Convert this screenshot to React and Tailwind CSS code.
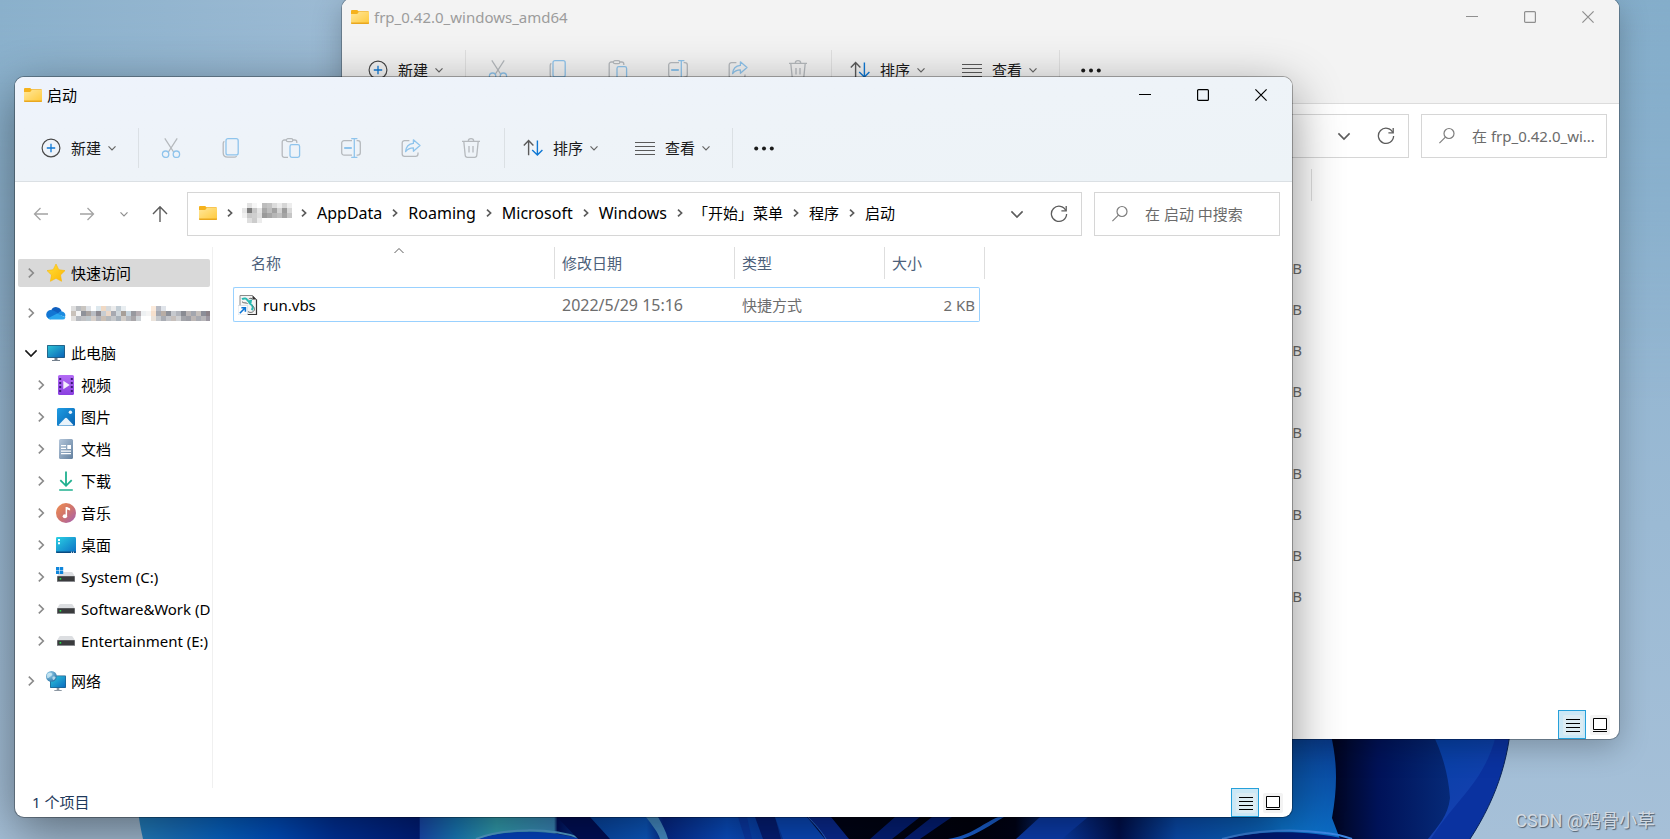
import React from "react";

/* ---------- small line icons ---------- */

function ChevronDown({ className = "", size = 10, stroke = 1.2 }) {
  return (
    <svg className={className} width={size} height={size} viewBox="0 0 10 10" fill="none" stroke="currentColor" strokeWidth={stroke} aria-hidden="true">
      <path d="M1.5 3.4 5 6.9l3.5-3.5" />
    </svg>
  );
}

function ChevronRight({ className = "", size = 16, stroke = 1.6 }) {
  return (
    <svg className={className} width={size} height={size} viewBox="0 0 16 16" fill="none" stroke="currentColor" strokeWidth={stroke} aria-hidden="true">
      <path d="M5.8 3.6 10.3 8l-4.5 4.4" />
    </svg>
  );
}

function CrumbChevron() {
  return (
    <svg className="shrink-0 text-[#5c5c5c]" width="26" height="16" viewBox="0 0 26 16" fill="none" stroke="currentColor" strokeWidth="1.7" aria-hidden="true">
      <path d="M11 4.6 14.6 8 11 11.4" />
    </svg>
  );
}

function FolderIcon() {
  return (
    <svg className="shrink-0" width="18" height="14" viewBox="0 0 18 14" aria-hidden="true">
      <defs>
        <linearGradient id="folderFace" x1="0" y1="0" x2="1" y2="1">
          <stop offset="0" stopColor="#ffe79a" />
          <stop offset="1" stopColor="#ffc93a" />
        </linearGradient>
      </defs>
      <path d="M0 1a1 1 0 0 1 1-1h5.2l1.3 1.2H17a1 1 0 0 1 1 1V12H0z" fill="#f5b21c" />
      <path d="M0 4h6.2l1.6-2H18v11a1 1 0 0 1-1 1H1a1 1 0 0 1-1-1z" fill="url(#folderFace)" />
      <path d="M0 12.6V13a1 1 0 0 0 1 1h16a1 1 0 0 0 1-1v-.4z" fill="#e9a71f" />
    </svg>
  );
}

function PlusCircle() {
  return (
    <svg width="20" height="20" viewBox="0 0 20 20" fill="none" aria-hidden="true">
      <circle cx="10" cy="10" r="8.9" stroke="#4a4a4a" strokeWidth="1.2" />
      <path d="M10 5.8v8.4M5.8 10h8.4" stroke="#0f78d4" strokeWidth="1.3" />
    </svg>
  );
}

const GREY = "#b5b9bd";
const BLUE = "#8fc4ec";

function CutIcon() {
  return (
    <svg width="20" height="20" viewBox="0 0 20 20" fill="none" strokeWidth="1.3" aria-hidden="true">
      <path d="M3.8.4 12.6 14M16.2.4 7.4 14" stroke={GREY} />
      <circle cx="4.6" cy="16.2" r="3.2" stroke={BLUE} />
      <circle cx="15.4" cy="16.2" r="3.2" stroke={BLUE} />
    </svg>
  );
}

function CopyIcon() {
  return (
    <svg width="20" height="20" viewBox="0 0 20 20" fill="none" strokeWidth="1.3" aria-hidden="true">
      <path d="M3.4 3.4C2.6 3.8 2.2 4.5 2.2 5.6v9.2c0 2.6 1.8 4.4 4.4 4.4h6.6c1.2 0 1.9-.4 2.4-1.2" stroke={GREY} />
      <rect x="5" y=".7" width="12.2" height="16.2" rx="2" stroke={BLUE} />
    </svg>
  );
}

function PasteIcon() {
  return (
    <svg width="20" height="20" viewBox="0 0 20 20" fill="none" strokeWidth="1.3" aria-hidden="true">
      <path d="M7 19.3H3.2a2 2 0 0 1-2-2V4a2 2 0 0 1 2-2h2.2M11.6 2h2.2a2 2 0 0 1 2 2v1" stroke={GREY} />
      <rect x="5.4" y=".7" width="6.4" height="3" rx="1.5" stroke={GREY} />
      <rect x="9" y="6.6" width="9.6" height="12.7" rx="1.8" stroke={BLUE} />
    </svg>
  );
}

function RenameIcon() {
  return (
    <svg width="20" height="20" viewBox="0 0 20 20" fill="none" strokeWidth="1.3" aria-hidden="true">
      <path d="M11 2.7H3.1A2.4 2.4 0 0 0 .7 5.1v9.6a2.4 2.4 0 0 0 2.4 2.4H11M15.6 2.7h1.3a2.4 2.4 0 0 1 2.4 2.4v9.6a2.4 2.4 0 0 1-2.4 2.4h-1.3" stroke={GREY} />
      <path d="M13.3.7v18.6M10.2.7h6.2M10.2 19.3h6.2" stroke={BLUE} />
      <path d="M3.2 10h7.6" stroke={BLUE} strokeWidth="2" />
    </svg>
  );
}

function ShareIcon() {
  return (
    <svg width="20" height="20" viewBox="0 0 20 20" fill="none" strokeWidth="1.3" strokeLinejoin="round" aria-hidden="true">
      <path d="M8.4 2.6H3.6a2.4 2.4 0 0 0-2.4 2.4v11a2.4 2.4 0 0 0 2.4 2.4h11a2.4 2.4 0 0 0 2.4-2.4v-1.6" stroke={GREY} />
      <path d="M12.4 1.8 19 7.5l-6.6 5.7V9.8c-3.6 0-6 1.2-7.8 3.8.4-4.6 3-7.7 7.8-8.2z" stroke={BLUE} />
    </svg>
  );
}

function TrashIcon() {
  return (
    <svg width="20" height="20" viewBox="0 0 20 20" fill="none" stroke={GREY} strokeWidth="1.3" aria-hidden="true">
      <path d="M1 3.3h18M7.3 3.1a2.7 2.4 0 0 1 5.4 0M2.8 3.5l1.4 13.8a2.2 2.2 0 0 0 2.2 2h7.2a2.2 2.2 0 0 0 2.2-2l1.4-13.8M8 8v6.4M12 8v6.4" />
    </svg>
  );
}

function SortIcon() {
  return (
    <svg width="20" height="20" viewBox="0 0 20 20" fill="none" strokeWidth="1.4" aria-hidden="true">
      <path d="M5.6 17.2V2.8M.8 7.6l4.8-5 4.8 5" stroke="#5a5a5a" />
      <path d="M14.4 2.4v14.6M9.2 12l5.2 5 5-5" stroke="#0f78d4" />
    </svg>
  );
}

function ViewIcon() {
  return (
    <svg width="20" height="20" viewBox="0 0 20 20" fill="none" stroke="#5a5a5a" strokeWidth="1.2" aria-hidden="true">
      <path d="M0 4.5h20M0 8.5h20M0 12.5h20M0 16.5h20" />
    </svg>
  );
}

function MoreIcon() {
  return (
    <svg width="20" height="20" viewBox="0 0 20 20" fill="#1a1a1a" aria-hidden="true">
      <circle cx="2.2" cy="10.5" r="2" />
      <circle cx="10" cy="10.5" r="2" />
      <circle cx="17.8" cy="10.5" r="2" />
    </svg>
  );
}

/* ---------- navigation pane icons ---------- */

function StarIcon() {
  return (
    <svg width="20" height="20" viewBox="0 0 20 20" aria-hidden="true">
      <defs>
        <linearGradient id="star" x1="0" y1="0" x2="1" y2="1">
          <stop offset="0" stopColor="#ffdf3c" />
          <stop offset="1" stopColor="#fcb500" />
        </linearGradient>
      </defs>
      <path d="m10 1 2.8 5.7 6.2.9-4.5 4.4 1.1 6.3-5.6-3-5.6 3L5.5 12 1 7.6l6.2-.9z" fill="url(#star)" stroke="#fbb800" strokeWidth=".6" strokeLinejoin="round" />
    </svg>
  );
}

function CloudIcon() {
  return (
    <svg width="20" height="20" viewBox="0 0 20 20" aria-hidden="true">
      <path d="M5.2 7.2a5.600 5.600 0 0 1 10.400 1L10 12z" fill="#0f5fbf" />
      <path d="M4.600 16.200A4.600 4.600 0 0 1 5 7c2 0 3 .8 5.500 2.200l5 3z" fill="#1276d3" />
      <path d="M15.600 8.200A4.200 4.200 0 0 1 19 14l-7.500-3c1-1.600 2.300-2.700 4.100-2.800z" fill="#1b8be0" />
      <path d="M2 15.200 11.200 10.400l8.300 4a3.200 3.200 0 0 1-3 2.200H4.600c-1 0-2-.5-2.600-1.400z" fill="#2aa6ee" />
    </svg>
  );
}

function ComputerIcon() {
  return (
    <svg width="20" height="20" viewBox="0 0 20 20" aria-hidden="true">
      <defs>
        <linearGradient id="screen" x1="0" y1="0" x2="1" y2="1">
          <stop offset="0" stopColor="#2cc3d5" />
          <stop offset="1" stopColor="#0a63b8" />
        </linearGradient>
      </defs>
      <rect x="1" y="2" width="18" height="13" rx=".8" fill="#22577c" />
      <rect x="1.8" y="2.8" width="16.4" height="11.4" fill="url(#screen)" />
      <path d="M8.500 15h3v2h-3zM6 17h8v1H6z" fill="#74808c" />
    </svg>
  );
}

function VideoIcon() {
  return (
    <svg width="20" height="20" viewBox="0 0 20 20" aria-hidden="true">
      <defs>
        <linearGradient id="video" x1="0" y1="0" x2="0" y2="1">
          <stop offset="0" stopColor="#b46cf5" />
          <stop offset="1" stopColor="#8a3fe0" />
        </linearGradient>
      </defs>
      <rect x="2" y="0" width="16" height="20" rx="1.5" fill="url(#video)" />
      <path d="M3.200 3h2v2h-2zm0 4h2v2h-2zm0 4h2v2h-2zm0 4h2v2h-2zM14.800 3h2v2h-2zm0 4h2v2h-2zm0 4h2v2h-2zm0 4h2v2h-2z" fill="#3c1a78" />
      <path d="M7.300 5.800v8.400L13.800 10z" fill="#f4eefc" />
    </svg>
  );
}

function PictureIcon() {
  return (
    <svg width="20" height="20" viewBox="0 0 20 20" aria-hidden="true">
      <defs>
        <linearGradient id="picture" x1="0" y1="0" x2="1" y2="1">
          <stop offset="0" stopColor="#1f9de4" />
          <stop offset="1" stopColor="#0762b0" />
        </linearGradient>
      </defs>
      <rect x="1" y="1" width="18" height="18" rx="1.5" fill="url(#picture)" />
      <path d="m2.400 18.200 6.600-7a1.400 1.400 0 0 1 2 0l6.600 7-.6.300H3z" fill="#e8f3fb" />
      <circle cx="14.4" cy="5.2" r="1.7" fill="#e8f3fb" />
    </svg>
  );
}

function DocumentIcon() {
  return (
    <svg width="20" height="20" viewBox="0 0 20 20" aria-hidden="true">
      <defs>
        <linearGradient id="doc" x1="0" y1="0" x2="1" y2="1">
          <stop offset="0" stopColor="#b4c6da" />
          <stop offset="1" stopColor="#62809f" />
        </linearGradient>
      </defs>
      <rect x="3" y="0" width="14" height="20" rx="1.5" fill="url(#doc)" />
      <path d="M5 6h5v1.300H5zm0 2.700h5V10H5zm0 2.700h10v1.300H5zm0 2.600h10v1.200H5zM11.300 6H15v4h-3.700z" fill="#fff" />
    </svg>
  );
}

function DownloadIcon() {
  return (
    <svg width="20" height="20" viewBox="0 0 20 20" fill="none" stroke="#1fb08f" strokeWidth="1.8" aria-hidden="true">
      <path d="M10 .6v14M4.300 9.200l5.700 5.600 5.700-5.600" />
      <path d="M3.200 19h13.600" strokeWidth="1.7" />
    </svg>
  );
}

function MusicIcon() {
  return (
    <svg width="20" height="20" viewBox="0 0 20 20" aria-hidden="true">
      <defs>
        <linearGradient id="music" x1="0" y1="0" x2="1" y2="1">
          <stop offset="0" stopColor="#f08e50" />
          <stop offset=".5" stopColor="#d0746c" />
          <stop offset="1" stopColor="#a35fb5" />
        </linearGradient>
      </defs>
      <circle cx="10" cy="10" r="10" fill="url(#music)" />
      <ellipse cx="8.9" cy="13.2" rx="2.2" ry="2" fill="#fff" />
      <path d="M9.600 4h1.500l3 1.400v2l-3-1v6.800H9.600z" fill="#fff" />
    </svg>
  );
}

function DesktopIcon() {
  return (
    <svg width="20" height="20" viewBox="0 0 20 20" aria-hidden="true">
      <defs>
        <linearGradient id="desk" x1="0" y1="0" x2="1" y2="1">
          <stop offset="0" stopColor="#2bd0e4" />
          <stop offset="1" stopColor="#0b6fc4" />
        </linearGradient>
      </defs>
      <rect x="0" y="2" width="20" height="16" rx="1.2" fill="url(#desk)" />
      <path d="M0 16.600h20v.4a1 1 0 0 1-1 1H1a1 1 0 0 1-1-1z" fill="#0a4a80" />
      <path d="M2 4h2v2H2zm0 3.300h2v2H2zM15 16.800h1v1h-1zm2 0h1v1h-1z" fill="#fff" />
    </svg>
  );
}

function DriveIcon({ system = false }) {
  return (
    <svg width="20" height="20" viewBox="0 0 20 20" aria-hidden="true">
      <path d="M4.500 5h11a1.500 1.500 0 0 1 1.300.8L19 9.500H1l2.200-3.700A1.500 1.500 0 0 1 4.500 5z" fill="#dcdee1" />
      <rect x="1" y="9" width="18" height="6" rx=".6" fill="#8a8c90" />
      <rect x="1.6" y="9.4" width="16.8" height="4.6" fill="#3a3b3d" />
      <rect x="3.6" y="11" width="1.6" height="1.6" fill="#22e04a" />
      {system ? <path d="M0 0h3.300v3.200H0zm3.900 0H7.200v3.200H3.900zM0 3.800h3.300V7H0zm3.900 0H7.200V7H3.900z" fill="#0f86dc" /> : null}
    </svg>
  );
}

function NetworkIcon() {
  return (
    <svg width="20" height="20" viewBox="0 0 20 20" aria-hidden="true">
      <defs>
        <linearGradient id="net" x1="0" y1="0" x2="1" y2="1">
          <stop offset="0" stopColor="#2fc6da" />
          <stop offset="1" stopColor="#0a6cc0" />
        </linearGradient>
        <radialGradient id="globe" cx=".35" cy=".3" r=".8">
          <stop offset="0" stopColor="#9fd4ee" />
          <stop offset="1" stopColor="#2472a6" />
        </radialGradient>
      </defs>
      <rect x="4" y="4.5" width="16" height="12.5" rx=".8" fill="#1f5f8a" />
      <rect x="4.7" y="5.2" width="14.6" height="11.1" fill="url(#net)" />
      <path d="M10.700 17h2.600v2h-2.600zM8.300 19h7.400v1H8.300z" fill="#8d98a3" />
      <circle cx="5.4" cy="5.4" r="5.4" fill="url(#globe)" />
      <path d="M1.600 2.600C3 1.600 5 1.400 6 2.400S5.400 5 4.300 5.400 2.400 7.800 1.400 7 .8 3.600 1.600 2.600zM7 5.600c1.200-.4 2.700 0 2.600 1S8 9.500 7.200 9 6 6 7 5.600z" fill="#d3ecf6" opacity=".75" />
    </svg>
  );
}

function ScriptFileIcon() {
  return (
    <svg className="shrink-0" width="20" height="20" viewBox="0 0 20 20" aria-hidden="true">
      <path d="M2 .5h12.500l4 4V19.500H2z" fill="#f4f4f4" stroke="#8a8a8a" strokeWidth="1" />
      <path d="M18.500 4.500V19.500H9" fill="none" stroke="#333" strokeWidth="1.2" />
      <path d="M14.500.5v4h4z" fill="#333" />
      <path d="M4 4.200c2.400-1.400 4.600-.8 5.200.8s2.600 1.400 4.200 2.800" fill="none" stroke="#27b9b1" strokeWidth="2" />
      <path d="M14 5.600c-3 0-3.600 1.600-1.800 3.200 2.600 2 3.600 3.600 1.400 6.200" fill="none" stroke="#27b9b1" strokeWidth="2" />
      <path d="M4 6.800c1.600 1.600 4 .6 5.600 1.800M10.600 4.200c1.400-1.400 3.600-1.200 4 .4M10 16.600c2.400 1.600 5.600.8 6.400-1.800.4-1.800-.8-3.200-2-4.200" fill="none" stroke="#666" strokeWidth="1" />
      <rect x="0" y="10.500" width="9.500" height="9.500" fill="#fff" stroke="#c9d3dc" strokeWidth=".6" />
      <path d="M1.800 18.200 6.500 13.500M3.400 12.800h4v4" fill="none" stroke="#0a74d6" strokeWidth="1.6" />
    </svg>
  );
}

/* ---------- pixelated names ---------- */

function Mosaic({ rows, cell, label }) {
  return (
    <svg className="shrink-0" width={rows[0].length * cell} height={rows.length * cell} role="img" aria-label={label} shapeRendering="crispEdges">
      {rows.map((row, y) =>
        row.map((color, x) => (
          <rect key={x + "-" + y} x={x * cell} y={y * cell} width={cell} height={cell} fill={color} />
        ))
      )}
    </svg>
  );
}

const USER_MOSAIC = [
  ["#fff", "#e2e2e2", "#f6f6f6", "#fff", "#bdbdbd", "#c4c4c4", "#dcdcdc", "#ececec", "#d6d6d6", "#ededed"],
  ["#e6e6e6", "#7d7d7d", "#c6c6c6", "#e4e4e4", "#a8a8a8", "#bdbdbd", "#a2a2a2", "#d2d2d2", "#9c9c9c", "#d8d8d8"],
  ["#f0f0f0", "#c9c9c9", "#cfcfcf", "#dedede", "#9a9a9a", "#a6a6a6", "#b6b6b6", "#c0c0c0", "#a4a4a4", "#c6c6c6"],
  ["#fff", "#dedede", "#cccccc", "#ececec", "#fff", "#fff", "#fff", "#fff", "#fff", "#fff"],
];

const DRIVE_MOSAIC = [
  ["#dedede", "#b9bcc0", "#c9c5c0", "#dfe3e8", "#fff", "#dde8ee", "#f0d9c4", "#d6dadd", "#ececec", "#c3ced6", "#e9eef1", "#fff", "#fff", "#fff", "#fff", "#fff", "#fbeadb", "#b8bbc4", "#e0e4ea", "#fff", "#fff", "#fff", "#fff", "#fff", "#fff", "#fff", "#fff", "#fff"],
  ["#c9c2bb", "#f4f4f4", "#8f9299", "#a9a3a0", "#b9bdc4", "#8e8b92", "#c8cdd2", "#ecd8c8", "#a7a9b1", "#cfd6db", "#a79f98", "#c6d3dc", "#98999f", "#b6aeb2", "#eef1f3", "#f5f5f5", "#f6e0cd", "#a5a8b0", "#b8ada5", "#8e9199", "#c6c9ce", "#b2b5bc", "#8a8c93", "#b9b4b4", "#a3a6ae", "#c4beba", "#8c8e98", "#8c8288"],
  ["#e3e1df", "#b7babf", "#c2c2c4", "#bfc8cd", "#d7cfc9", "#b4b6bc", "#cbbfb4", "#b5b9bd", "#c5c7ca", "#a9b2bb", "#d2cdc8", "#b6b9be", "#a9a6a9", "#cdd2d6", "#fff", "#fff", "#ebe3db", "#c5c8cc", "#a9acb3", "#c4c5c9", "#c6bfbb", "#cfd0d2", "#a3a4a9", "#9d9ea5", "#bcb6b4", "#a8aab1", "#b7b5b8", "#9c97a1"],
];

/* ---------- window parts ---------- */

function TitleBar({ title, active }) {
  const button = "flex h-9 w-[58px] items-center justify-center";
  return (
    <div className={"flex h-9 items-center pl-[9px] pr-[2px] " + (active ? "text-black" : "text-[#8f8f8f]")}>
      <FolderIcon />
      <h2 className={"ml-[5px] flex-1 whitespace-nowrap text-[15px] leading-5 " + (active ? "" : "text-[#9c9c9c]")}>{title}</h2>
      <button type="button" aria-label="最小化" className={button}>
        <svg width="12" height="12" viewBox="0 0 12 12" fill="none" stroke="currentColor"><path d="M0 5.5h12" /></svg>
      </button>
      <button type="button" aria-label="最大化" className={button}>
        <svg width="12" height="12" viewBox="0 0 12 12" fill="none" stroke="currentColor" strokeWidth="1.2"><rect x=".6" y=".6" width="10.8" height="10.8" rx="1" /></svg>
      </button>
      <button type="button" aria-label="关闭" className={button}>
        <svg width="12" height="12" viewBox="0 0 12 12" fill="none" stroke="currentColor" strokeWidth="1.2"><path d="M.4.4l11.2 11.2M11.6.4.4 11.6" /></svg>
      </button>
    </div>
  );
}

function Separator({ className = "" }) {
  return <span className={"h-10 w-px shrink-0 bg-black/8 " + className} />;
}

function MenuButton({ icon, label, className }) {
  return (
    <button type="button" className={"flex h-10 shrink-0 items-center whitespace-nowrap pl-[18px] text-[15px] leading-5 text-[#1a1a1a] " + className}>
      {icon}
      <span className="ml-[10px]">{label}</span>
      <ChevronDown className="ml-[6px] text-[#666]" />
    </button>
  );
}

const TOOLS = [
  ["剪切", CutIcon],
  ["复制", CopyIcon],
  ["粘贴", PasteIcon],
  ["重命名", RenameIcon],
  ["共享", ShareIcon],
  ["删除", TrashIcon],
];

function CommandBar() {
  return (
    <div className="flex h-[68px] items-center pl-2 pt-px">
      <MenuButton icon={<PlusCircle />} label="新建" className="pr-[21px]" />
      <Separator className="mr-[2px]" />
      {TOOLS.map(([name, Icon]) => (
        <button key={name} type="button" disabled aria-label={name} className="flex h-10 w-[60px] shrink-0 items-center justify-center">
          <Icon />
        </button>
      ))}
      <Separator className="ml-[3px]" />
      <MenuButton icon={<SortIcon />} label="排序" className="pr-[18px]" />
      <MenuButton icon={<ViewIcon />} label="查看" className="pr-[21px]" />
      <Separator />
      <button type="button" aria-label="查看更多" className="flex h-10 w-[62px] shrink-0 items-center justify-center">
        <MoreIcon />
      </button>
    </div>
  );
}

function AddressRow({ children, searchText }) {
  return (
    <div className="flex items-center pb-[11px] pl-[3px] pr-3 pt-[10px]">
      <button type="button" aria-label="后退" className="flex h-11 w-[46px] shrink-0 items-center justify-center text-[#a3a3a3]">
        <svg width="16" height="16" viewBox="0 0 16 16" fill="none" stroke="currentColor" strokeWidth="1.3"><path d="M15 8H1.5M7.5 2l-6 6 6 6" /></svg>
      </button>
      <button type="button" aria-label="前进" className="flex h-11 w-[46px] shrink-0 items-center justify-center text-[#a3a3a3]">
        <svg width="16" height="16" viewBox="0 0 16 16" fill="none" stroke="currentColor" strokeWidth="1.3"><path d="M1 8h13.5M8.5 2l6 6-6 6" /></svg>
      </button>
      <button type="button" aria-label="最近浏览的位置" className="flex h-11 w-7 shrink-0 items-center justify-center text-[#8f8f8f]">
        <ChevronDown />
      </button>
      <button type="button" aria-label="上移" className="flex h-11 w-11 shrink-0 items-center justify-center text-[#5c5c5c]">
        <svg width="16" height="18" viewBox="0 0 16 18" fill="none" stroke="currentColor" strokeWidth="1.4"><path d="M8 17V2M1 9l7-7.300L15 9" /></svg>
      </button>
      <div className="ml-[5px] flex h-11 min-w-0 flex-1 items-center border border-[#d6d6d6] bg-white pl-[11px]">
        <nav className="flex min-w-0 flex-1 items-center overflow-hidden pb-[2px]" aria-label="地址">
          {children}
        </nav>
        <button type="button" aria-label="以前的位置" className="flex h-10 w-10 items-center justify-center text-[#5c5c5c]">
          <ChevronDown size={16} stroke={1} />
        </button>
        <button type="button" aria-label="刷新" className="flex h-10 w-11 items-center justify-center text-[#5c5c5c]">
          <svg width="18" height="18" viewBox="0 0 18 18" fill="none" stroke="currentColor" strokeWidth="1.3">
            <path d="M15.900 5.600A7.600 7.600 0 1 0 16.600 9" />
            <path d="M16.200 1v4.800h-4.800" />
          </svg>
        </button>
      </div>
      <label className="ml-3 flex h-11 w-[186px] shrink-0 items-center border border-[#d6d6d6] bg-white pl-4">
        <svg className="shrink-0 text-[#7d7d7d]" width="18" height="18" viewBox="0 0 18 18" fill="none" stroke="currentColor" strokeWidth="1.2">
          <circle cx="11" cy="6.5" r="5" />
          <path d="M7.400 10.200 1.400 16.200" />
        </svg>
        <input
          type="text"
          aria-label="搜索"
          placeholder={searchText}
          className="ml-4 w-full min-w-0 flex-1 bg-transparent text-[15px] leading-5 outline-none placeholder:text-[#6b6b6b]"
        />
      </label>
    </div>
  );
}

const LOCATIONS = [
  { name: "视频", icon: <VideoIcon /> },
  { name: "图片", icon: <PictureIcon /> },
  { name: "文档", icon: <DocumentIcon /> },
  { name: "下载", icon: <DownloadIcon /> },
  { name: "音乐", icon: <MusicIcon /> },
  { name: "桌面", icon: <DesktopIcon /> },
  { name: "System (C:)", icon: <DriveIcon system /> },
  { name: "Software&Work (D:)", icon: <DriveIcon /> },
  { name: "Entertainment (E:)", icon: <DriveIcon /> },
];

function TreeItem({ icon, children, nested, selected, open }) {
  return (
    <button
      type="button"
      aria-expanded={Boolean(open)}
      className={
        "my-[2px] flex h-7 w-full items-center overflow-hidden rounded-[2px] text-[15px] leading-5 text-black " +
        (nested ? "pl-[15px] " : "pl-[5px] ") +
        (selected ? "bg-[#d9d9d9]" : "")
      }
    >
      {open ? (
        <ChevronDown size={16} stroke={1} className="shrink-0 text-[#1a1a1a]" />
      ) : (
        <ChevronRight className="shrink-0 text-[#8a8a8a]" />
      )}
      <span className="ml-[7px] shrink-0">{icon}</span>
      <span className="ml-[5px] whitespace-nowrap">{children}</span>
    </button>
  );
}

function NavigationPane() {
  return (
    <aside className="w-[198px] shrink-0 overflow-hidden border-r border-[#f0f0f0] pl-[3px] pr-[2px] pt-[10px]">
      <ul className="flex flex-col gap-2">
        <li><TreeItem icon={<StarIcon />} selected>快速访问</TreeItem></li>
        <li>
          <TreeItem icon={<CloudIcon />}>
            <Mosaic rows={DRIVE_MOSAIC} cell={5} label="云存储" />
          </TreeItem>
        </li>
        <li>
          <TreeItem icon={<ComputerIcon />} open>此电脑</TreeItem>
          <ul className="flex flex-col">
            {LOCATIONS.map((item) => (
              <li key={item.name}>
                <TreeItem icon={item.icon} nested>{item.name}</TreeItem>
              </li>
            ))}
          </ul>
        </li>
        <li><TreeItem icon={<NetworkIcon />}>网络</TreeItem></li>
      </ul>
    </aside>
  );
}

function FileTable({ columns, children }) {
  return (
    <table className="w-[752px] table-fixed border-collapse">
      <colgroup>
        <col className="w-[322px]" />
        <col className="w-[180px]" />
        <col className="w-[150px]" />
        <col className="w-[100px]" />
      </colgroup>
      <thead>
        <tr>
          {columns.map((name, i) => (
            <th key={i} scope="col" className="p-0 pb-[5px] text-left text-[15px] font-normal leading-5 text-[#4c607a]">
              <div className={"relative flex h-8 items-center border-r border-[#dedede] " + (i === 0 ? "pl-[18px]" : "pl-[7px]")}>
                {name}
                {i === 0 && name ? (
                  <svg className="absolute left-40 top-0 text-[#5c5c5c]" width="12" height="8" viewBox="0 0 12 8" fill="none" stroke="currentColor"><path d="M1.500 6 6 1.500 10.500 6" /></svg>
                ) : null}
              </div>
            </th>
          ))}
        </tr>
      </thead>
      <tbody>{children}</tbody>
    </table>
  );
}

function StatusBar({ text }) {
  return (
    <footer className="flex h-[29px] shrink-0 items-center pl-[17px] pr-[9px]">
      <span className="flex-1 whitespace-nowrap pb-[2px] text-[15px] leading-5 text-[#1e395b]">{text}</span>
      <button type="button" aria-label="详细信息" className="flex h-[29px] w-7 items-center justify-center border border-[#26a0da] bg-[#cbe8f6] pl-px pt-px">
        <span className="flex h-5 w-5 items-center justify-center rounded-[2px] bg-[#dcecf3]">
          <svg width="14" height="14" viewBox="0 0 14 14" stroke="#000"><path d="M0 1.500h14M0 5.500h14M0 9.500h14M0 13.500h14" /></svg>
        </span>
      </button>
      <button type="button" aria-label="大图标" className="ml-1 flex h-5 w-5 items-center justify-center rounded-[2px] bg-[#f3f3f3]">
        <svg width="14" height="14" viewBox="0 0 14 14" fill="#fff" stroke="#000"><path d="M.5.5h13v11H.5zM0 13.500h14" /></svg>
      </button>
    </footer>
  );
}

function ExplorerWindow({ className, title, active, address, searchText, sidebar, status, children }) {
  return (
    <section
      aria-label={title}
      className={"absolute flex flex-col overflow-hidden rounded-[9px] bg-white " + className}
    >
      <header className={"border-b " + (active ? "border-[#dbe0e4] bg-linear-to-br from-[#eef3fc] via-[#eef3f8] to-[#edf3f7]" : "border-[#dcdcdc] bg-[#f3f3f3]")}>
        <TitleBar title={title} active={active} />
        <CommandBar />
      </header>
      <AddressRow searchText={searchText}>{address}</AddressRow>
      <div className="flex min-h-0 flex-1">
        {sidebar}
        <main className="min-w-0 flex-1 overflow-hidden pl-5">{children}</main>
      </div>
      <StatusBar text={status} />
    </section>
  );
}

/* ---------- wallpaper ---------- */

function Wallpaper() {
  return (
    <svg className="absolute inset-0 h-full w-full" viewBox="0 0 1670 839" preserveAspectRatio="xMidYMid slice" aria-hidden="true">
      <defs>
        <linearGradient id="sky" x1="0" y1="0" x2="0" y2="1">
          <stop offset="0" stopColor="#8cb3d0" />
          <stop offset=".25" stopColor="#90b4d0" />
          <stop offset="1" stopColor="#a6c0d8" />
        </linearGradient>
        <linearGradient id="skyTop" x1="0" y1="0" x2="1" y2="0">
          <stop offset="0" stopColor="#8ab0cb" />
          <stop offset=".2" stopColor="#9cbad3" />
          <stop offset="1" stopColor="#84adca" />
        </linearGradient>
        <linearGradient id="fade" x1="0" y1="0" x2="0" y2="1">
          <stop offset="0" stopColor="#fff" />
          <stop offset="1" stopColor="#000" />
        </linearGradient>
        <mask id="topMask"><rect width="1670" height="400" fill="url(#fade)" /></mask>
        <linearGradient id="strip" gradientUnits="userSpaceOnUse" x1="139" y1="0" x2="1292" y2="0">
          <stop offset="0" stopColor="#2484c6" />
          <stop offset=".03" stopColor="#1a76c6" />
          <stop offset=".07" stopColor="#0868cc" />
          <stop offset=".12" stopColor="#0050c4" />
          <stop offset=".17" stopColor="#0033a0" />
          <stop offset=".243" stopColor="#001f80" />
          <stop offset=".244" stopColor="#1a4fb8" />
          <stop offset=".275" stopColor="#1a7fc0" />
          <stop offset=".31" stopColor="#35a8ba" />
          <stop offset=".36" stopColor="#3d8fc4" />
          <stop offset=".363" stopColor="#001060" />
          <stop offset=".39" stopColor="#0848a8" />
          <stop offset=".44" stopColor="#0d5cc8" />
          <stop offset=".455" stopColor="#062a90" />
          <stop offset=".51" stopColor="#0a52cc" />
          <stop offset=".56" stopColor="#0838a0" />
          <stop offset=".6" stopColor="#000418" />
          <stop offset=".72" stopColor="#00020e" />
          <stop offset=".76" stopColor="#000318" />
          <stop offset=".8" stopColor="#0a40b4" />
          <stop offset=".85" stopColor="#001050" />
          <stop offset=".9" stopColor="#0a50b8" />
          <stop offset="1" stopColor="#0c74cc" />
        </linearGradient>
        <linearGradient id="petalDark" gradientUnits="userSpaceOnUse" x1="1330" y1="0" x2="1450" y2="0">
          <stop offset="0" stopColor="#00051e" />
          <stop offset=".4" stopColor="#001258" />
          <stop offset="1" stopColor="#062a78" />
        </linearGradient>
        <linearGradient id="petalBright" gradientUnits="userSpaceOnUse" x1="1420" y1="739" x2="1480" y2="839">
          <stop offset="0" stopColor="#0440a4" />
          <stop offset="1" stopColor="#1a40b4" />
        </linearGradient>
        <linearGradient id="petalLeft" gradientUnits="userSpaceOnUse" x1="1285" y1="839" x2="1337" y2="739">
          <stop offset="0" stopColor="#0c78d0" />
          <stop offset="1" stopColor="#0a3f98" />
        </linearGradient>
      </defs>
      <rect width="1670" height="839" fill="url(#sky)" />
      <rect width="1670" height="400" fill="url(#skyTop)" mask="url(#topMask)" />
      <path d="M135 780c2 25 4 42 8 59h1160v-59z" fill="url(#strip)" />
      <path d="M478 839c24-9 70-10 102 0z" fill="#0646c8" />
      <path d="M476 839c26-11 76-12 106 0" fill="none" stroke="#58a8d8" strokeWidth="2" />
      <path d="M557 817 578 839h32l-20-22z" fill="#00105c" />
      <path d="M646 817c6 8 12 15 14 22h8c-2-8-6-15-10-22z" fill="#4a94d0" />
      <path d="M738 817l7 22h7l-5-22z" fill="#0a3cb0" />
      <path d="M755 817l8 22h18l-6-22z" fill="#051f7c" />
      <path d="M775 817l8 22h42l-18-22z" fill="#0a4cc4" />
      <path d="M807 817c8 8 14 15 18 22h24l-18-22z" fill="#0a2c98" />
      <path d="M808 817c8 8 14 15 18 22" fill="none" stroke="#2a6ad0" />
      <path d="M895 817l-25 22h22l28-22zM932 817l-28 22h16l32-22z" fill="#04207c" />
      <path d="M998 817c-18 8-26 18-50 22h14c18-6 28-14 42-22z" fill="#1c66dc" />
      <path d="M1040 817l-24 22h46l26-22z" fill="#0c40b8" />
      <path d="M1292 700h220c0 52-14 96-42 139h-178z" fill="#0a32a0" />
      <path d="M1512 700c0 52-14 96-42 139" fill="none" stroke="#0a2458" />
      <path d="M1325 700h174c2 34-10 64-30 89-14 18-26 30-38 50h-106z" fill="url(#petalBright)" />
      <path d="M1325 700h85c26 30 38 66 40 98-2 18-12 28-22 41h-120z" fill="url(#petalDark)" />
      <path d="M1285 700h35c16 42 20 74 12 118l8 21h-60z" fill="url(#petalLeft)" />
      <path d="M1225 839c34-9 84-9 120 0z" fill="#001a78" />
      <path d="M1222 839c36-10 76-10 104-6 10 1 18 3 26 6" fill="none" stroke="#3c86e4" strokeWidth="2" />
    </svg>
  );
}

/* ---------- page ---------- */

const CRUMBS = ["AppData", "Roaming", "Microsoft", "Windows"];
const CRUMBS_CJK = ["「开始」菜单", "程序", "启动"];

function Crumb({ name, className }) {
  return (
    <>
      <CrumbChevron />
      <a href="#" className={"shrink-0 whitespace-nowrap leading-5 text-black " + className}>{name}</a>
    </>
  );
}

export default function App() {
  return (
    <div className="relative h-screen w-full overflow-hidden bg-[#94b5d0] [font-family:'Noto_Sans','Noto_Sans_CJK_SC',sans-serif]">
      <Wallpaper />

      <ExplorerWindow
        className="-top-px bottom-[100px] left-[342px] right-[51px] shadow-[0_0_0_1px_rgba(0,0,0,0.25),0_8px_30px_rgba(0,0,0,0.25)]"
        title="frp_0.42.0_windows_amd64"
        searchText="在 frp_0.42.0_wi..."
        sidebar={<div className="w-[198px] shrink-0" />}
      >
        <FileTable columns={["", "", "", ""]}>
          {["", "KB", "KB", "KB", "KB", "KB", "KB", "KB", "KB", "KB"].map((size, i) => (
            <tr key={i} className="h-[41px]">
              <td colSpan={3} className="p-0" />
              <td className="p-0 pr-[10px] text-right text-[15px] leading-5 text-[#6d6d6d]">{size}</td>
            </tr>
          ))}
        </FileTable>
      </ExplorerWindow>

      <ExplorerWindow
        active
        className="bottom-[22px] left-[15px] right-[378px] top-[77px] shadow-[0_0_0_1px_rgba(0,0,0,0.3),0_14px_50px_rgba(0,0,0,0.45)]"
        title="启动"
        searchText="在 启动 中搜索"
        status="1 个项目"
        sidebar={<NavigationPane />}
        address={
          <>
            <FolderIcon />
            <CrumbChevron />
            <span className="-mx-px shrink-0">
              <Mosaic rows={USER_MOSAIC} cell={5} label="用户" />
            </span>
            {CRUMBS.map((name) => <Crumb key={name} name={name} className="text-base" />)}
            {CRUMBS_CJK.map((name) => <Crumb key={name} name={name} className="text-[15px]" />)}
          </>
        }
      >
        <FileTable columns={["名称", "修改日期", "类型", "大小"]}>
          <tr className="text-[15px] leading-5 text-[#6d6d6d]">
            <td className="p-0 py-[3px]">
              <div className="flex h-[35px] items-center rounded-l-[2px] border-y border-l border-[#99d1ff] pl-1">
                <ScriptFileIcon />
                <span className="ml-[5px] text-black">run.vbs</span>
              </div>
            </td>
            <td className="p-0 py-[3px]">
              <div className="flex h-[35px] items-center border-y border-[#99d1ff] pl-[7px] text-base leading-5">2022/5/29 15:16</div>
            </td>
            <td className="p-0 py-[3px]">
              <div className="flex h-[35px] items-center border-y border-[#99d1ff] pl-[7px]">快捷方式</div>
            </td>
            <td className="p-0 py-[3px] pr-[5px]">
              <div className="flex h-[35px] items-center justify-end rounded-r-[2px] border-y border-r border-[#99d1ff] pr-1">2 KB</div>
            </td>
          </tr>
        </FileTable>
      </ExplorerWindow>

      <p className="absolute bottom-1 right-[15px] whitespace-nowrap text-lg leading-7 text-[#d3dae2] [font-family:Roboto,'Noto_Sans_CJK_SC',sans-serif] [text-shadow:1px_1px_1px_rgba(60,70,80,0.8)]">
        CSDN @鸡骨小草
      </p>
    </div>
  );
}
